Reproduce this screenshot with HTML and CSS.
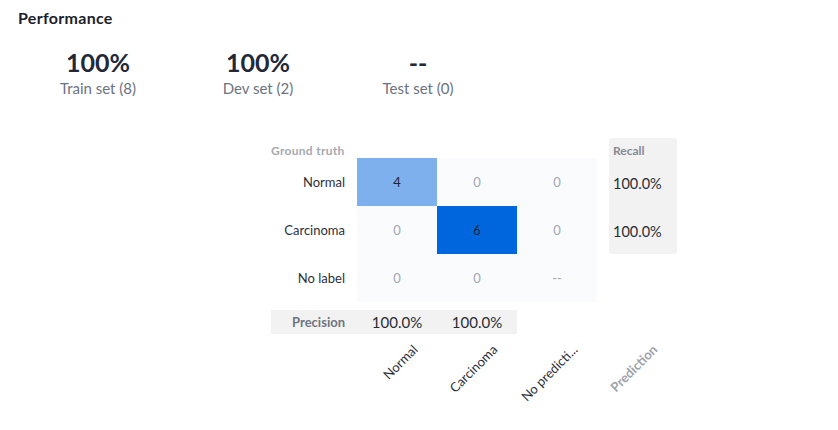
FILE: index.html
```html
<!DOCTYPE html>
<html>
<head>
<meta charset="utf-8">
<link rel="stylesheet" href="styles.css">
</head>
<body>
<div class="page">
  <h2 class="title">Performance</h2>
  <div class="stats">
    <div class="stat"><div class="stat-value">100%</div><div class="stat-label">Train set (8)</div></div>
    <div class="stat"><div class="stat-value">100%</div><div class="stat-label">Dev set (2)</div></div>
    <div class="stat"><div class="stat-value">--</div><div class="stat-label">Test set (0)</div></div>
  </div>
  <div class="matrix">
    <div class="cells-bg"></div>
    <div class="recall-bg"></div>
    <div class="precision-bg"></div>

    <div class="axis-head gt">Ground truth</div>
    <div class="recall-head">Recall</div>

    <div class="row-label r1">Normal</div>
    <div class="cell r1 c1 light">4</div>
    <div class="cell r1 c2 zero">0</div>
    <div class="cell r1 c3 zero">0</div>
    <div class="recall-val r1">100.0%</div>

    <div class="row-label r2">Carcinoma</div>
    <div class="cell r2 c1 zero">0</div>
    <div class="cell r2 c2 dark">6</div>
    <div class="cell r2 c3 zero">0</div>
    <div class="recall-val r2">100.0%</div>

    <div class="row-label r3">No label</div>
    <div class="cell r3 c1 zero">0</div>
    <div class="cell r3 c2 zero">0</div>
    <div class="cell r3 c3 zero">--</div>

    <div class="prec-label">Precision</div>
    <div class="prec-val c1">100.0%</div>
    <div class="prec-val c2">100.0%</div>

    <div class="xlabel c1"><span>Normal</span></div>
    <div class="xlabel c2"><span>Carcinoma</span></div>
    <div class="xlabel c3"><span>No predicti...</span></div>
    <div class="xlabel c4"><span class="axis">Prediction</span></div>
  </div>
</div>
</body>
</html>
```

FILE: styles.css
```css
* { box-sizing: border-box; }
html, body { margin: 0; padding: 0; background: #ffffff; }
body { font-family: Lato, "Noto Sans", sans-serif; color: #1f2433; }
.page { padding: 8px 18px 0 18px; }
.title { margin: 0; font-size: 16px; font-weight: 700; line-height: 20px; letter-spacing: 0.3px; color: #1c1f2b; }
.stats { display: flex; margin-top: 19px; }
.stat { width: 160px; display: flex; flex-direction: column; align-items: center; }
.stat-value { font-size: 25px; font-weight: 700; line-height: 30px; color: #222838; }
.stat-label { font-size: 15px; line-height: 18px; color: #6b7280; margin-top: 2px; }

.matrix {
  display: grid;
  grid-template-columns: 86px 80px 80px 80px 12px 68px;
  grid-template-rows: 20px 48px 48px 48px 8px 24px 80px;
  margin-top: 41px;
  margin-left: 253px;
  width: max-content;
}
.cells-bg { grid-column: 2 / 5; grid-row: 2 / 5; background: #fafbfd; }
.recall-bg { grid-column: 6 / 7; grid-row: 1 / 4; background: #f2f2f2; border-radius: 2px; }
.precision-bg { grid-column: 1 / 4; grid-row: 6 / 7; background: #f2f2f2; }

.axis-head { grid-column: 1; grid-row: 1; font-size: 12px; letter-spacing: 0.3px; font-weight: 700; color: #a6a9b0; line-height: 14px; padding-top: 6px; white-space: nowrap; }
.recall-head { grid-column: 6; grid-row: 1; font-size: 12px; font-weight: 700; color: #868b94; line-height: 14px; padding: 6px 0 0 4px; }

.r1 { grid-row: 2; }
.r2 { grid-row: 3; }
.r3 { grid-row: 4; }
.c1 { grid-column: 2; }
.c2 { grid-column: 3; }
.c3 { grid-column: 4; }
.c4 { grid-column: 5 / 7; }

.row-label { grid-column: 1; display: flex; align-items: center; justify-content: flex-end; padding-right: 12px; font-size: 13px; color: #2b2f3a; }
.cell { display: flex; align-items: center; justify-content: center; font-size: 13px; }
.cell.zero { color: #a3a7ae; }
.cell.light { background: #7fb0ee; color: #1f2433; }
.cell.dark { background: #0066dd; color: #1f2433; }
.recall-val { grid-column: 6; display: flex; align-items: center; padding: 2px 0 0 4px; font-size: 14.5px; color: #2a2d35; }

.prec-label { grid-row: 6; grid-column: 1; display: flex; align-items: center; justify-content: flex-end; padding-right: 12px; font-size: 13px; font-weight: 700; color: #6f7581; }
.prec-val { grid-row: 6; display: flex; align-items: center; justify-content: center; font-size: 15px; color: #2a2d35; }

.xlabel { grid-row: 7; display: flex; justify-content: flex-end; align-items: flex-start; padding-right: 22px; }
.xlabel span {
  flex: none;
  display: block;
  white-space: nowrap;
  font-size: 13px;
  line-height: 16px;
  margin-top: 5px;
  color: #2b2f3a;
  transform-origin: 100% 50%;
  transform: rotate(-45deg);
}
.xlabel span.axis { font-weight: 700; color: #9ea2aa; font-size: 13px; }
```
